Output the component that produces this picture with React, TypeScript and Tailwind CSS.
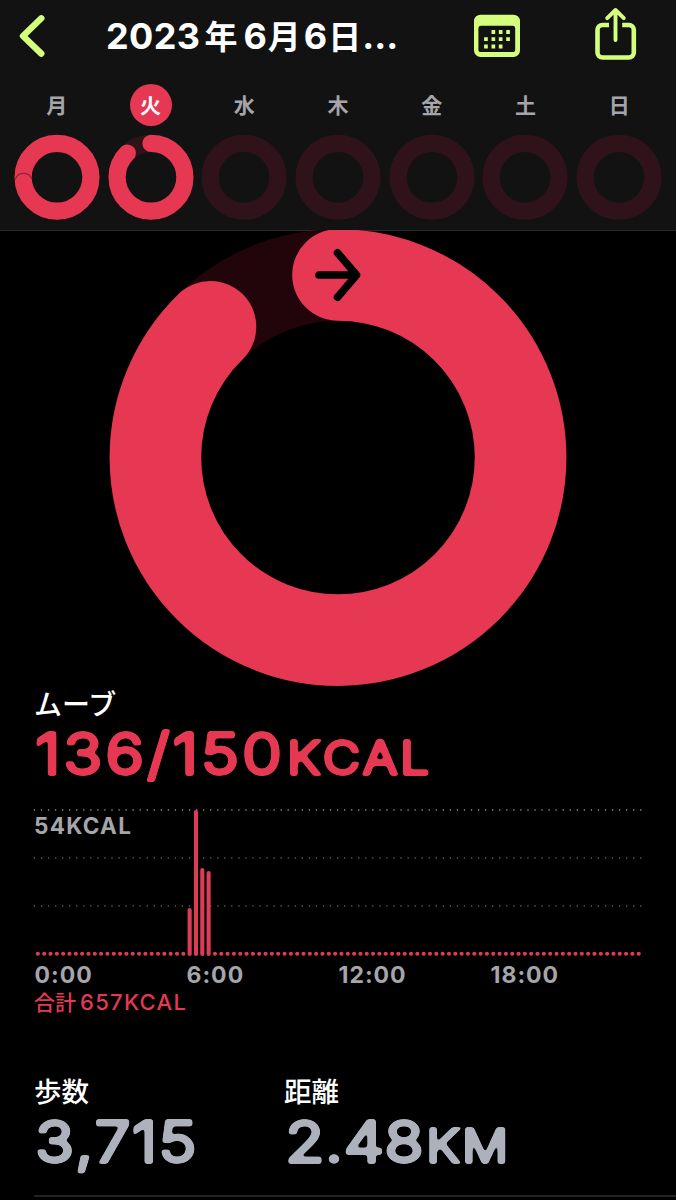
import clsx from "clsx";

const days = [
  { label: "月", progress: 1, lap: true },
  { label: "火", progress: 0.877, active: true },
  { label: "水", progress: 0 },
  { label: "木", progress: 0 },
  { label: "金", progress: 0 },
  { label: "土", progress: 0 },
  { label: "日", progress: 0 },
];

// one slot per 15 minutes, value is the bar's height in px
const bars: Record<number, number> = { 24: 48, 25: 146, 26: 88, 27: 85 };
const slots = Array.from({ length: 96 }, (_, i) => i);
const hours = ["0:00", "6:00", "12:00", "18:00"];

function DayRing({ progress, lap }: { progress: number; lap?: boolean }) {
  return (
    <svg width="86" height="86" viewBox="0 0 86 86" fill="none">
      <circle cx="43" cy="43.3" r="33.9" stroke="#30131a" strokeWidth="17.2" />
      {progress > 0 && (
        <circle
          cx="43"
          cy="43.3"
          r="33.9"
          stroke="#e63853"
          strokeWidth="17.2"
          strokeLinecap="round"
          pathLength="1"
          strokeDasharray={`${progress} 2`}
          transform="rotate(-90 43 43.3)"
        />
      )}
      {lap && <path d="M1.2 45.5C2.5 41.5 5.5 39.4 9.5 39.4S16.5 41.5 17.6 45" stroke="#8f2435" strokeWidth="1.1" />}
    </svg>
  );
}

function MoveRing() {
  return (
    <svg className="-mt-px shrink-0" width="458" height="458" viewBox="0 0 458 458" fill="none">
      <circle cx="229" cy="228.5" r="182.6" stroke="#22050b" strokeWidth="91.6" />
      <circle
        cx="229"
        cy="228.5"
        r="182.6"
        stroke="#e63853"
        strokeWidth="91.6"
        strokeLinecap="round"
        pathLength="1"
        strokeDasharray="0.877 2"
        transform="rotate(-90 229 228.5)"
      />
      <path d="M210 46H247M228.5 23.8L247.5 46L228.5 68.2" stroke="#000" strokeWidth="7.6" strokeLinecap="round" strokeLinejoin="round" />
    </svg>
  );
}

function MoveChart() {
  return (
    <svg className="block" width="676" height="152" viewBox="0 0 676 152" fill="none">
      {[5, 53, 101].map((y, i) => (
        <path key={y} d={`M33.8 ${y}H642`} stroke={i === 0 ? "#8a8a8d" : "#5c5c5f"} strokeWidth="1.4" strokeDasharray="1.3 5.75" />
      ))}
      {slots.map((i) => {
        const h = bars[i] ?? 4;
        const bottom = bars[i] ? 151 : 150.7;
        return <rect key={i} x={35.8 + i * 6.325} y={bottom - h} width="4.1" height={h} rx="2" fill="#dc3c56" />;
      })}
    </svg>
  );
}

// blur, then a steep alpha ramp: rounds off the corners of the big numerals
function RoundedFilter() {
  return (
    <svg className="absolute size-0" aria-hidden="true">
      <filter id="rounded" x="-5%" y="-10%" width="110%" height="120%" colorInterpolationFilters="sRGB">
        <feGaussianBlur stdDeviation="1.6" />
        <feColorMatrix values="1 0 0 0 0  0 1 0 0 0  0 0 1 0 0  0 0 0 5 -2.1" />
      </filter>
    </svg>
  );
}

function Value({ number, unit, className }: { number: string; unit?: string; className?: string }) {
  return (
    <p
      className={clsx(
        "flex h-[60px] w-fit origin-left scale-x-[1.13] items-baseline pl-[1px] text-[56.5px] leading-[59px] font-light whitespace-nowrap [-webkit-text-stroke-width:3.9px] [filter:url(#rounded)] [font-kerning:none]",
        className,
      )}
    >
      <span>{number}</span>
      {unit && <span className="ml-[2px] text-[45px] tracking-[2.6px]">{unit}</span>}
    </p>
  );
}

export default function App() {
  return (
    <div className="flex h-[1200px] w-[676px] flex-col overflow-hidden bg-black font-['Inter','Noto_Sans_CJK_JP',sans-serif] text-white">
      <RoundedFilter />
      <header className="h-[230px] shrink-0 bg-[#121213]">
        <div className="flex h-[72px] items-center">
          <svg className="ml-[19px] shrink-0" width="27" height="72" viewBox="0 0 27 72" fill="none">
            <path d="M22.3 18.3L4 36L22.3 53.6" stroke="#d4ff7d" strokeWidth="6.4" strokeLinecap="round" strokeLinejoin="round" />
          </svg>
          <h1 className="ml-[60px] flex h-[52px] w-[320px] items-baseline text-[36px] leading-[52px] font-bold whitespace-nowrap">
            <span className="tracking-[0.4px]">2023</span>
            <span className="ml-[4px] text-[33px]">年</span>
            <span className="ml-[6px]">6</span>
            <span className="ml-px text-[33px]">月</span>
            <span className="ml-[3px]">6</span>
            <span className="ml-[1px] text-[33px]">日</span>
            <span className="ml-[1px]">...</span>
          </h1>
          <svg className="ml-[48px] shrink-0" width="46" height="72" viewBox="0 0 46 72" fill="none">
            <path fillRule="evenodd" d="M6.5 14.7H39.5A6.5 6.5 0 0 1 46 21.2V50.5A6.5 6.5 0 0 1 39.5 57H6.5A6.5 6.5 0 0 1 0 50.5V21.2A6.5 6.5 0 0 1 6.5 14.7ZM7 25.8A2.6 2.6 0 0 0 4.4 28.4V49.5A2.6 2.6 0 0 0 7 52.1H38.6A2.6 2.6 0 0 0 41.2 49.5V28.4A2.6 2.6 0 0 0 38.6 25.8Z" fill="#d4ff7d" />
            <path d="M17.5 32H21.2M24.8 32H28.5M32.2 32H35.9M10.1 39.2H13.8M17.5 39.2H21.2M24.8 39.2H28.5M32.2 39.2H35.9M10.1 46.5H13.8M17.5 46.5H21.2M24.8 46.5H28.5" stroke="#d4ff7d" strokeWidth="3.8" />
          </svg>
          <svg className="ml-[75px] shrink-0" width="42" height="72" viewBox="0 0 42 72" fill="none">
            <path d="M14 25H7.5A5 5 0 0 0 2.5 30V52.5A5 5 0 0 0 7.5 57.5H33.8A5 5 0 0 0 38.8 52.5V30A5 5 0 0 0 33.8 25H27.2" stroke="#d4ff7d" strokeWidth="4.6" />
            <path d="M20.5 40V10.5M12.2 18.2L20.5 10L28.8 18.2" stroke="#d4ff7d" strokeWidth="3.9" strokeLinecap="round" strokeLinejoin="round" />
          </svg>
        </div>
        <div className="grid grid-cols-7 px-[10px] pt-[12px]">
          {days.map((day) => (
            <div key={day.label} className="flex flex-col items-center">
              <span
                className={clsx(
                  "grid size-[42px] place-items-center rounded-full pt-px text-[21px] leading-[42px] font-bold",
                  day.active ? "bg-[#e63853] text-white" : "text-[#a5a5aa]",
                )}
              >
                {day.label}
              </span>
              <div className="mt-[8px]">
                <DayRing progress={day.progress} lap={day.lap} />
              </div>
            </div>
          ))}
        </div>
      </header>

      <main className="flex-1 overflow-hidden shadow-[inset_0_1px_0_#29292b]">
        <div className="flex justify-center">
          <MoveRing />
        </div>

        <section className="h-[118px] pl-[34px]">
          <h2 className="h-[37px] text-[28px] leading-[37px] font-medium">ムーブ</h2>
          <Value number="136/150" unit="KCAL" className="tracking-[2.9px] text-[#e63853]" />
        </section>

        <section className="h-[270px]">
          <div className="relative h-[152px]">
            <MoveChart />
            <span className="absolute top-[9px] left-[34px] text-[22.5px] leading-[24px] font-bold tracking-[1.3px] text-[#a5a5aa]">54KCAL</span>
          </div>
          <div className="mt-[5px] ml-[34.5px] grid h-[26px] w-[608px] grid-cols-4 text-[23px] leading-[26px] font-bold tracking-[1px] text-[#a5a5aa]">
            {hours.map((hour) => (
              <span key={hour}>{hour}</span>
            ))}
          </div>
          <p className="ml-[34px] flex h-[28px] items-baseline gap-[4px] text-[22px] leading-[28px] font-medium text-[#e63853]">
            <span className="text-[21px]">合計</span>
            <span className="tracking-[1.3px]">657KCAL</span>
          </p>
        </section>

        <section className="ml-[34px] flex h-[122px] border-b-2 border-[#232325] text-[#adb1bc]">
          <div className="w-[250px]">
            <h2 className="h-[37px] text-[27.5px] leading-[35px] font-medium text-white">歩数</h2>
            <Value number="3,715" className="tracking-[1.3px]" />
          </div>
          <div>
            <h2 className="h-[37px] text-[27.5px] leading-[35px] font-medium text-white">距離</h2>
            <Value number="2.48" unit="KM" className="tracking-[0.6px]" />
          </div>
        </section>
      </main>
    </div>
  );
}
